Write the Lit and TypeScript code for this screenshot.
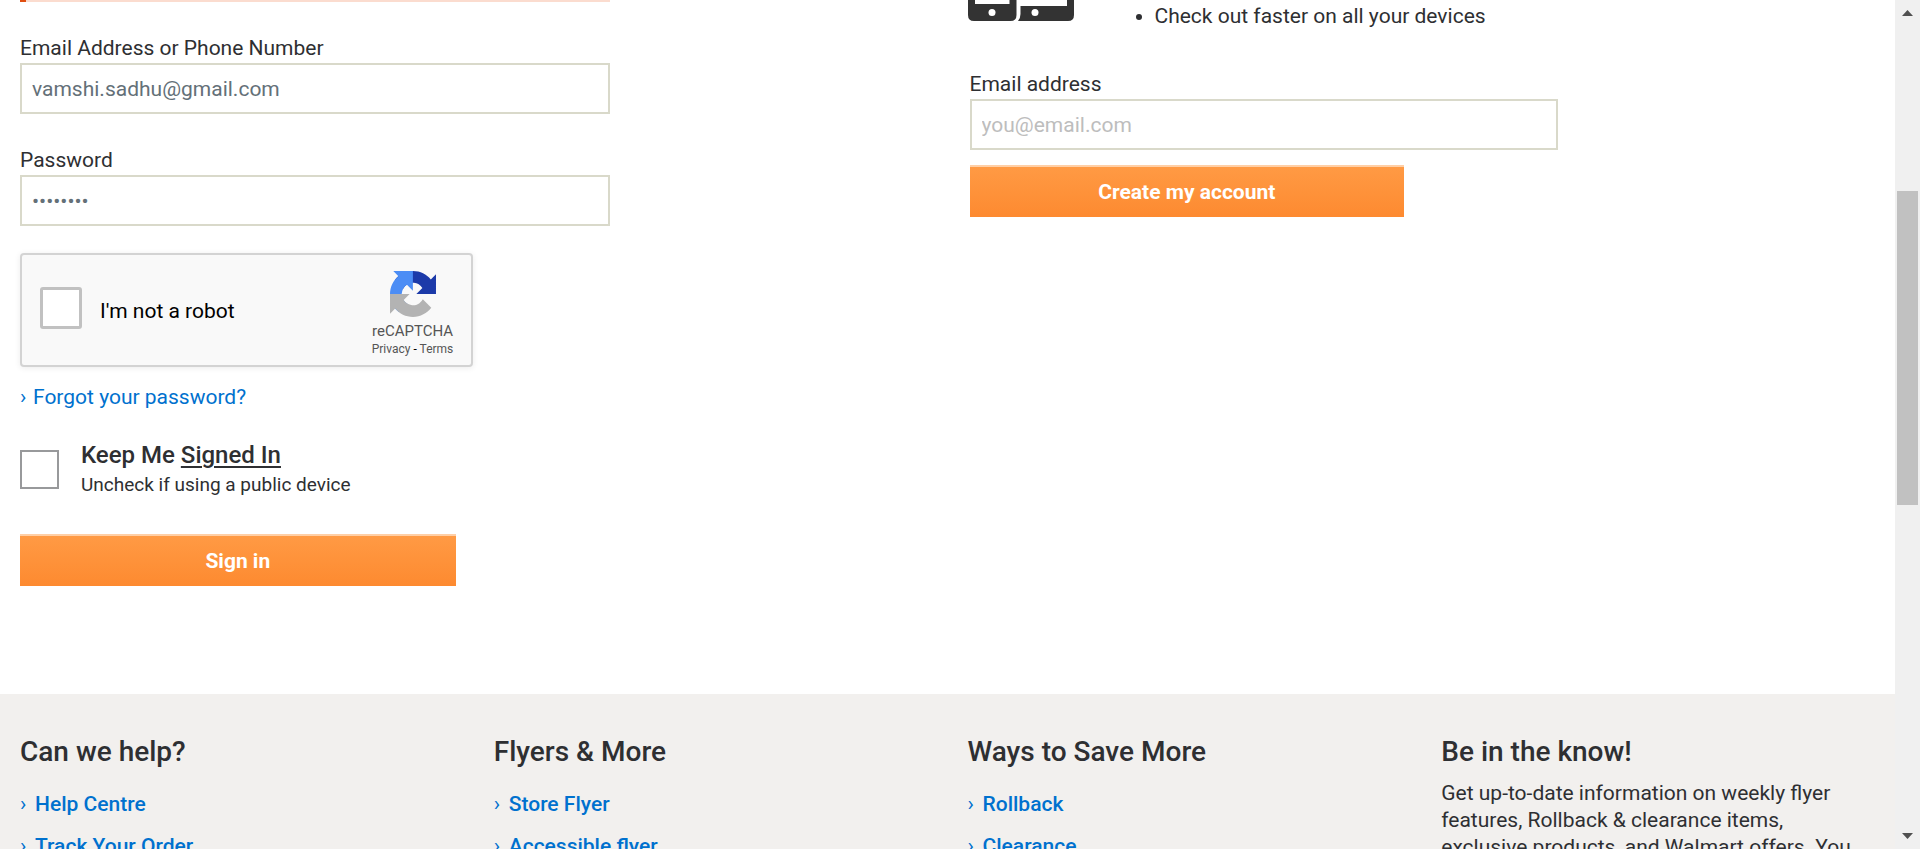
import { LitElement, html, css } from "lit";
import { customElement } from "lit/decorators.js";

const columns = [
  { title: "Can we help?", links: ["Help Centre", "Track Your Order"] },
  { title: "Flyers & More", links: ["Store Flyer", "Accessible flyer"] },
  { title: "Ways to Save More", links: ["Rollback", "Clearance"] },
];

@customElement("app-root")
export class AppRoot extends LitElement {
  static styles = css`
    :host {
      display: flex;
      height: 100vh;
      overflow: hidden;
      background: #fff;
      color: #2e2f32;
      font: 21px/28px Roboto, "Liberation Sans", sans-serif;
    }
    * { box-sizing: border-box; }
    a { color: #0071ce; text-decoration: none; }
    .page { flex: 1; min-width: 0; display: flex; flex-direction: column; overflow: hidden; }
    .forms { display: grid; grid-template-columns: 1fr 1fr; flex: none; min-height: 694px; }
    .signin, .signup { padding: 0 20px; display: flex; flex-direction: column; align-items: flex-start; }
    .alert { width: 65%; height: 2px; background: #fbdccf; border-left: 6px solid #e04e10; margin-bottom: 32px; }
    .field { display: flex; flex-direction: column; width: 65%; }
    .field label { line-height: 28px; padding-bottom: 1px; }
    .field input {
      width: 100%;
      height: 51px;
      padding: 0 10px;
      border: 2px solid #d9d9ca;
      border-radius: 0;
      background: #fff;
      color: #647078;
      font: inherit;
      outline: none;
    }
    .field input::placeholder { color: #bdbdbd; opacity: 1; }
    .field + .field { margin-top: 32px; }
    .captcha {
      display: flex;
      align-items: center;
      width: 453px;
      height: 114px;
      margin-top: 27px;
      padding: 0 18px;
      border: 2px solid #d3d3d3;
      border-radius: 4px;
      background: #f9f9f9;
      box-shadow: 0 1px 6px rgba(0, 0, 0, 0.08);
      color: #000;
    }
    .captcha label { flex: 1; padding: 2px 0 0 18px; font-size: 21px; }
    .box { appearance: none; margin: 0; flex: none; background: #fff; }
    .robot { width: 42px; height: 42px; margin-bottom: 4px; border: 3px solid #c1c1c1; border-radius: 3px; }
    .brand { display: flex; flex-direction: column; align-items: center; width: 81px; padding-top: 8px; color: #555; font-size: 15px; line-height: 20px; }
    .brand svg { width: 46px; height: 46px; margin-bottom: 4px; }
    .legal { font-size: 12px; line-height: 16px; color: #000; white-space: nowrap; }
    .legal a { color: #555; }
    .forgot { margin-top: 16px; }
    .keep { display: flex; align-items: center; gap: 22px; margin-top: 28px; }
    .device { width: 39px; height: 39px; border: 2px solid #98999b; }
    .keep label { display: block; font-size: 24px; font-weight: 500; line-height: 32px; }
    .keep u { text-underline-offset: 3px; text-decoration-thickness: 2px; }
    .keep small { display: block; font-size: 19px; line-height: 28px; }
    .cta {
      width: 48%;
      height: 52px;
      padding: 0;
      border: 0;
      border-top: 2px solid #ffcfa6;
      background: linear-gradient(#ff9a44, #fd8a30);
      color: #fff;
      font: 700 21px/28px Roboto, "Liberation Sans", sans-serif;
    }
    .signin .cta { margin-top: 35px; }
    .signup .cta { margin-top: 15px; }
    .create { width: 100%; padding-left: 2px; }
    .perks { display: flex; gap: 61px; height: 70px; }
    .perks svg { width: 106px; height: 22px; }
    .perks ul { margin: 2px 0 0; padding-left: 20px; }
    .footer {
      display: grid;
      grid-template-columns: repeat(4, 1fr);
      flex: 1 0 auto;
      padding-top: 40px;
      background: #f2f0ee;
    }
    .col { padding: 0 20px; }
    .col h2 { margin: 0 0 13px; font-size: 28px; font-weight: 500; line-height: 36px; }
    .col ul { margin: 0; padding: 0; list-style: none; }
    .col li { line-height: 42px; font-weight: 500; }
    .chev { display: inline-block; width: 15px; font-weight: 400; }
    .forgot .chev { width: 13px; }
    .col h2.know { margin-bottom: 10px; }
    .col p { margin: 0; padding-right: 8px; line-height: 27px; }
    .scroll { display: flex; flex-direction: column; flex: none; width: 25px; padding: 10px 2px; background: #f0f0f0; }
    .scroll svg { width: 21px; height: 6px; flex: none; }
    .thumb { height: 314px; margin-top: 175px; background: #c1c1c1; }
    .rest { flex: 1; }
  `;

  render() {
    return html`
      <div class="page">
        <main class="forms">
          <form class="signin">
            <div class="alert"></div>
            <div class="field">
              <label for="login">Email Address or Phone Number</label>
              <input id="login" type="text" value="vamshi.sadhu@gmail.com" />
            </div>
            <div class="field">
              <label for="password">Password</label>
              <input id="password" type="password" value="password" />
            </div>
            <div class="captcha">
              <input class="box robot" id="robot" type="checkbox" />
              <label for="robot">I'm not a robot</label>
              <div class="brand">
                <svg viewBox="0 0 64 64" aria-hidden="true">
                  <path fill="#1c3aa9" d="M64 31.955l-.033-1.37V4.687l-7.16 7.16C50.948 4.674 42.033.093 32.05.093c-10.4 0-19.622 4.96-25.458 12.64l11.736 11.86a15.55 15.55 0 0 1 4.754-5.334c2.05-1.6 4.952-2.906 8.968-2.906.485 0 .86.057 1.135.163 4.976.393 9.288 3.14 11.828 7.124l-8.307 8.307L64 31.953" />
                  <path fill="#4c8df5" d="M31.862.094l-1.37.033H4.594l7.16 7.16C4.58 13.147 0 22.06 0 32.046c0 10.4 4.96 19.622 12.64 25.458L24.5 45.768a15.55 15.55 0 0 1-5.334-4.754c-1.6-2.05-2.906-4.952-2.906-8.968 0-.485.057-.86.163-1.135.393-4.976 3.14-9.288 7.124-11.828l8.307 8.307L31.86.095" />
                  <path fill="#b3b3b3" d="M.001 32.045l.033 1.37v25.898l7.16-7.16c5.86 7.173 14.774 11.754 24.76 11.754 10.4 0 19.622-4.96 25.458-12.64l-11.736-11.86a15.55 15.55 0 0 1-4.754 5.334c-2.05 1.6-4.952 2.906-8.968 2.906-.485 0-.86-.057-1.135-.163-4.976-.393-9.288-3.14-11.828-7.124l8.307-8.307c-10.522.04-22.4.066-27.295-.005" />
                </svg>
                reCAPTCHA
                <div class="legal"><a href="#">Privacy</a> - <a href="#">Terms</a></div>
              </div>
            </div>
            <a class="forgot" href="#"><span class="chev">›</span>Forgot your password?</a>
            <div class="keep">
              <input class="box device" id="keep" type="checkbox" />
              <div>
                <label for="keep">Keep Me <u>Signed In</u></label>
                <small>Uncheck if using a public device</small>
              </div>
            </div>
            <button class="cta" type="button">Sign in</button>
          </form>
          <form class="signup">
            <div class="perks">
              <svg viewBox="0 0 106 22" aria-hidden="true">
                <path fill="#333" fill-rule="evenodd" d="M0 0H48.500V15Q48.500 21 42.500 21H6Q0 21 0 15ZM7 0V4H41.500V0Z" />
                <circle cx="24" cy="12.500" r="3.500" fill="#fff" />
                <path fill="#333" d="M52.500 6H99V0H106V15Q106 21 100 21H50Q52.500 18 52.500 14Z" />
                <circle cx="67" cy="12.500" r="3.500" fill="#fff" />
              </svg>
              <ul><li>Check out faster on all your devices</li></ul>
            </div>
            <div class="create">
              <div class="field">
                <label for="email">Email address</label>
                <input id="email" type="email" placeholder="you@email.com" />
              </div>
              <button class="cta" type="button">Create my account</button>
            </div>
          </form>
        </main>
        <footer class="footer">
          ${columns.map(
            (c) => html`<section class="col">
              <h2>${c.title}</h2>
              <ul>${c.links.map((l) => html`<li><a href="#"><span class="chev">›</span>${l}</a></li>`)}</ul>
            </section>`,
          )}
          <section class="col">
            <h2 class="know">Be in the know!</h2>
            <p>Get up-to-date information on weekly flyer features, Rollback &amp; clearance items, exclusive products, and Walmart offers. You</p>
          </section>
        </footer>
      </div>
      <div class="scroll" aria-hidden="true">
        <svg viewBox="0 0 21 6"><path fill="#505050" d="M5 6L10.500 0L16 6Z" /></svg>
        <div class="thumb"></div>
        <div class="rest"></div>
        <svg viewBox="0 0 21 6"><path fill="#505050" d="M5 0L10.500 6L16 0Z" /></svg>
      </div>
    `;
  }
}
